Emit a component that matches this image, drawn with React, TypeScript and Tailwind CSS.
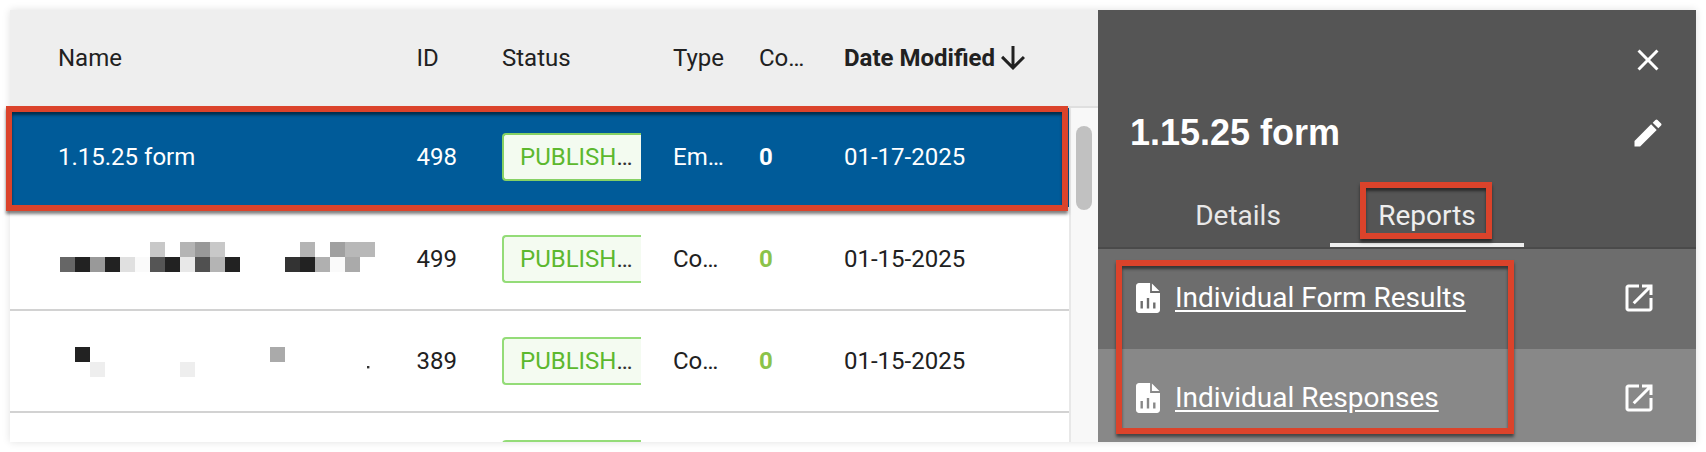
const roboto = "font-['Roboto',sans-serif]";

function Icon({ d, className }: { d: string; className?: string }) {
  return (
    <svg viewBox="0 0 24 24" className={className} fill="currentColor" fillRule="evenodd">
      <path d={d} />
    </svg>
  );
}

const CLOSE = "M19 6.41L17.59 5 12 10.59 6.41 5 5 6.41 10.59 12 5 17.59 6.41 19 12 13.41 17.59 19 19 17.59 13.41 12z";
const EDIT = "M3 17.25V21h3.75L17.81 9.94l-3.75-3.75L3 17.25zM20.71 7.04c.39-.39.39-1.02 0-1.41l-2.34-2.34a.9959.9959 0 0 0-1.41 0l-1.83 1.83 3.75 3.75 1.83-1.83z";
const OPEN = "M19 19H5V5h7V3H5c-1.11 0-2 .9-2 2v14c0 1.1.89 2 2 2h14c1.1 0 2-.9 2-2v-7h-2v7zM14 3v2h3.59l-9.83 9.83 1.41 1.41L19 6.41V10h2V3h-7z";
const ARROW = "M20 12l-1.41-1.41L13 16.17V4h-2v12.17l-5.58-5.59L4 12l8 8 8-8z";
const REPORT = "M13.4 2H6C4.9 2 4 2.9 4 4v16c0 1.1.9 2 2 2h12c1.1 0 2-.9 2-2V8.6h-6.6V2zM14.6 2.4V7.4H19.6L14.6 2.4zM7 14h1.6v5H7v-5zM11.2 12h1.6v7h-1.6v-7zM15.4 15h1.6v4h-1.6v-4z";

const GRID = "grid grid-cols-[406.5px_85.5px_171px_86px_85px_1fr] items-center";

type Cell = [number, number, string];
const MOSAIC_A: Cell[] = [
  [6, 0, "#c8c8c8"], [8, 0, "#b4b4b4"], [9, 0, "#999999"], [10, 0, "#c8c8c8"], [16, 0, "#b4b4b4"], [18, 0, "#a0a0a0"], [19, 0, "#b8b8b8"], [20, 0, "#b8b8b8"],
  [0, 1, "#666666"], [1, 1, "#222222"], [2, 1, "#999999"], [3, 1, "#222222"], [4, 1, "#e0e0e0"], [5, 1, "#fafafa"], [6, 1, "#555555"], [7, 1, "#222222"], [8, 1, "#e8e8e8"], [9, 1, "#505050"], [10, 1, "#b4b4b4"], [11, 1, "#222222"],
  [15, 1, "#333333"], [16, 1, "#222222"], [17, 1, "#b0b0b0"], [18, 1, "#fafafa"], [19, 1, "#aaaaaa"],
];
const MOSAIC_B: Cell[] = [
  [1, 0, "#222222"], [14, 0, "#aaaaaa"], [2, 1, "#eeeeee"], [8, 1, "#eeeeee"],
];

function Mosaic({ cells, dot, className }: { cells: Cell[]; dot?: boolean; className?: string }) {
  return (
    <svg width="320" height="30" viewBox="0 0 320 30" className={`ml-[50px] block ${className ?? ""}`}>
      {cells.map(([x, y, c]) => (
        <rect key={`${x}-${y}`} x={x * 15} y={y * 15} width="15" height="15" fill={c} />
      ))}
      {dot && <rect x="307" y="19" width="2.4" height="2.4" fill="#333333" />}
    </svg>
  );
}

function Pill({ selected }: { selected?: boolean }) {
  return (
    <div className={`box-border flex h-[48px] w-[139px] items-center rounded-l-[4px] border-y-2 border-l-2 pl-[16px] pr-[5px] ${selected ? "border-[#86d164] bg-[#f3fbf0]" : "border-[#94dc78] bg-[#f4fbf1]"}`}>
      <div className="w-full overflow-hidden text-ellipsis whitespace-nowrap text-[#333333]">
        <span className="text-[#5cb82e]">PUBLISHED</span>
      </div>
    </div>
  );
}

function Row({ name, id, type, date, selected }: { name: React.ReactNode; id: string; type: string; date: string; selected?: boolean }) {
  return (
    <div className={`${GRID} box-border shrink-0 border-b-2 ${selected ? "h-[101px] border-white bg-[#005b99] pb-[2px] text-white" : "h-[102px] border-[#d2d2d2] text-[#212121]"}`}>
      {name}
      <div>{id}</div>
      <Pill selected={selected} />
      <div>{type}</div>
      <div className={`font-bold ${selected ? "text-white" : "text-[#8bc34a]"}`}>0</div>
      <div>{date}</div>
    </div>
  );
}

function ReportRow({ label, bg, h }: { label: string; bg: string; h: string }) {
  return (
    <div className={`${bg} ${h} flex shrink-0 items-start pl-[32px] pr-[39px] pt-[31px]`}>
      <Icon d={REPORT} className="h-[36px] w-[36px] shrink-0 text-white" />
      <a className="ml-[9px] text-[28px] leading-[36px] text-white underline underline-offset-[3px]">{label}</a>
      <Icon d={OPEN} className="ml-auto h-[36px] w-[36px] shrink-0 text-white" />
    </div>
  );
}

const redBox = "absolute box-border border-[6px] border-[#db432b] shadow-[0_3px_3px_rgba(0,0,0,0.5),inset_0_3px_3px_rgba(0,0,0,0.5)] pointer-events-none";

export default function App() {
  return (
    <div className={`h-[452px] w-full overflow-hidden bg-white pl-[10px] pt-[10px] text-[24px] ${roboto}`}>
      <div className="relative flex h-[432px] w-[1686px] shadow-[0_0_8px_rgba(0,0,0,0.12)]">
        <div className="flex h-full w-[1088px] shrink-0 flex-col bg-white">
          <div className={`${GRID} box-border h-[98px] shrink-0 border-b-2 border-[#dfdfdf] bg-[#eeeeee] text-[#212121]`}>
            <div className="pl-[48px]">Name</div>
            <div>ID</div>
            <div>Status</div>
            <div>Type</div>
            <div>Co…</div>
            <div className="flex items-center font-bold">
              Date Modified
              <Icon d={ARROW} className="h-[36px] w-[36px]" />
            </div>
          </div>
          <div className="flex min-h-0 flex-1">
            <div className="flex min-w-0 flex-1 flex-col overflow-hidden">
              <Row selected id="498" type="Em…" date="01-17-2025" name={<div className="pl-[48px]">1.15.25 form</div>} />
              <Row id="499" type="Co…" date="01-15-2025" name={<Mosaic cells={MOSAIC_A} className="mb-[4px]" />} />
              <Row id="389" type="Co…" date="01-15-2025" name={<Mosaic cells={MOSAIC_B} dot className="mt-[2px]" />} />
              <div className={`${GRID} pt-[27px]`}>
                <div />
                <div />
                <Pill />
              </div>
            </div>
            <div className="box-border w-[29px] shrink-0 border-l-2 border-[#e8e8e8] bg-[#f8f8f8] pl-[5px] pt-[18px]">
              <div className="h-[84px] w-[16px] rounded-full bg-[#c1c1c1]" />
            </div>
          </div>
        </div>

        <div className="flex h-full min-w-0 flex-1 flex-col bg-[#555555] text-white">
          <div className="flex justify-end pr-[30px] pt-[32px]">
            <Icon d={CLOSE} className="h-[36px] w-[36px]" />
          </div>
          <div className="mt-[28px] flex items-center justify-between pl-[32px] pr-[30px]">
            <h1 className="m-0 font-['Liberation_Sans',sans-serif] text-[36px] font-bold leading-[54px]">1.15.25 form</h1>
            <Icon d={EDIT} className="h-[36px] w-[36px]" />
          </div>
          <div className="mt-[10px] box-border flex h-[79px] shrink-0 border-b-2 border-[#4a4a4a] pl-[48px] text-[28px] leading-[36px]">
            <div className="h-full w-[184px] pt-[28px] text-center text-[#e8e8e8]">Details</div>
            <div className="box-border h-full w-[194px] border-b-4 border-[#eeeeee] pt-[28px] text-center text-[#eeeeee]">Reports</div>
          </div>
          <ReportRow label="Individual Form Results" bg="bg-[#6d6d6d]" h="h-[100px]" />
          <ReportRow label="Individual Responses" bg="bg-[#888888]" h="h-[93px]" />
        </div>

        <div className={`${redBox} left-[-4px] top-[96px] h-[105px] w-[1062px]`} />
        <div className={`${redBox} left-[1350px] top-[172px] h-[57px] w-[132px]`} />
        <div className={`${redBox} left-[1106px] top-[250px] h-[174px] w-[398px]`} />
      </div>
    </div>
  );
}
